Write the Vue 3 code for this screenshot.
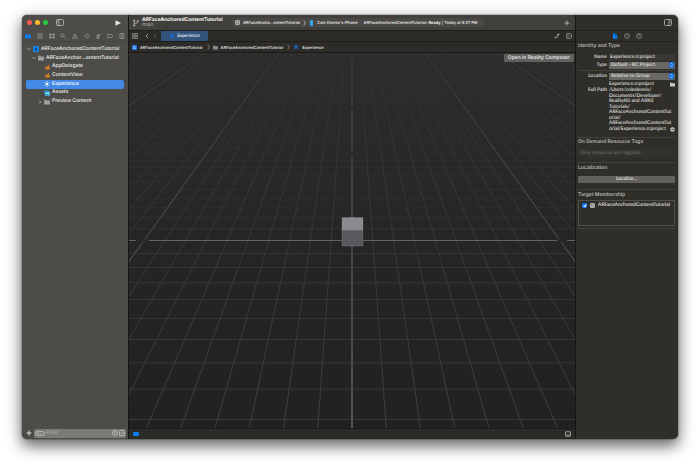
<script setup>
import { ref } from 'vue'

const name = ref('Experience.rcproject')
const filter = ref('')
const member = ref(true)

const files = [
  { label: 'ARFaceAnchoredContentTutorial', icon: 'app', depth: 0, arrow: 'down' },
  { label: 'ARFaceAnchor…ontentTutorial', icon: 'folder', depth: 1, arrow: 'down' },
  { label: 'AppDelegate', icon: 'swift', depth: 2 },
  { label: 'ContentView', icon: 'swift', depth: 2 },
  { label: 'Experience', icon: 'reality', depth: 2, selected: true },
  { label: 'Assets', icon: 'assets', depth: 2 },
  { label: 'Preview Content', icon: 'folder', depth: 2, arrow: 'right' }
]

const navigators = [
  { label: 'Project', d: 'M0 2h4.500l1 1.500H12V10.500H0z', filled: true },
  { label: 'Source Control', d: 'M1.5 1.5h9v9h-9zM4 4l4 4M8 4l-4 4' },
  { label: 'Symbols', d: 'M1 1.5h3v3H1zM8 1.5h3v3H8zM1 7.5h3v3H1zM8 7.5h3v3H8zM4 3h4M4 9h4M2.5 4.500v3M9.500 4.500v3' },
  { label: 'Find', d: 'M8 4.800a3.200 3.200 0 1 1-6.400 0a3.200 3.200 0 1 1 6.400 0M7.200 7.200L11 11' },
  { label: 'Issues', d: 'M6 1.500L11 10.500H1zM6 4.500v3M6 8.500v1' },
  { label: 'Tests', d: 'M6 1L11 6L6 11L1 6zM4.500 6l1 1l2-2' },
  { label: 'Debug', d: 'M2 5h4v6H2zM3 5V3h2v2M7 3h1M9 2h1M9 4h1M7 5h1M2 8h4' },
  { label: 'Breakpoints', d: 'M0.500 3h8.500L11.500 6L9 9H0.500z' },
  { label: 'Reports', d: 'M2 1h8v10H2zM4 3.500h4M4 6h4M4 8.500h4' }
]

const path = [
  '/Users/coledennis/',
  'Documents/Developer/',
  'RealityKit and ARKit',
  'Tutorials/',
  'ARFaceAnchoredContentTut',
  'orial/',
  'ARFaceAnchoredContentTut',
  'orial/Experience.rcproject'
]

// Perspective floor: lines meet at (centre, horizon); one unit is 20.8px wide on the x axis.
const W = 446
const H = 376
const cx = 223
const axis = 188
const horizon = -102
const depth = 23.6
const unit = 20.8
const drop = axis - horizon
const spread = (y) => (unit * (y - horizon)) / drop

const rails = []
for (let i = -34; i <= 34; i++) {
  rails.push({
    x1: cx + i * spread(0),
    x2: cx + i * spread(H),
    kind: i === 0 ? 'axis' : i % 10 === 0 ? 'major' : 'minor'
  })
}
const rungs = []
for (let k = -43; k <= 9; k++) {
  rungs.push({
    y: horizon + drop / (1 - k / depth),
    kind: k === 0 ? 'axis' : 'minor rung'
  })
}
</script>

<template>
  <div class="page">
    <main class="window">
      <aside class="sidebar">
        <header class="side-top">
          <i class="light red"></i><i class="light yellow"></i><i class="light green"></i>
          <button class="icon-btn toggle" aria-label="Toggle navigator">
            <svg width="8" height="7" viewBox="0 0 16 14"><rect x="1" y="1" width="14" height="12" rx="2" class="ln" /><path d="M6 1v12M2.500 4h2M2.500 6.500h2" class="ln" /></svg>
          </button>
          <button class="icon-btn run" aria-label="Run">
            <svg width="6" height="6" viewBox="0 0 12 12"><path d="M1 0.500L12 6L1 11.500z" fill="#e8e8e6" /></svg>
          </button>
        </header>
        <nav class="navs">
          <button v-for="n in navigators" :key="n.label" class="icon-btn" :aria-label="n.label">
            <svg width="6" height="6" viewBox="0 0 12 12"><path :d="n.d" :class="n.filled ? 'solid' : 'ln dim'" /></svg>
          </button>
        </nav>
        <ul class="tree">
          <li v-for="f in files" :key="f.label" :class="['depth' + f.depth, { selected: f.selected }]">
            <span class="arrow">
              <svg v-if="f.arrow" width="4" height="4" viewBox="0 0 8 8"><path :d="f.arrow === 'down' ? 'M1 2.500L4 5.500L7 2.500' : 'M2.500 1L5.500 4L2.500 7'" class="ln" /></svg>
            </span>
            <svg class="file" width="6" height="6" viewBox="0 0 12 12">
              <template v-if="f.icon === 'app'"><rect width="12" height="12" rx="2" fill="#178bec" /><path d="M6 2.500L3.200 9M6 2.500L8.800 9M2.500 7.500h7" stroke="#0b3768" stroke-width="1.300" fill="none" /></template>
              <path v-else-if="f.icon === 'folder'" d="M0 1.500h4.500l1.200 1.300H12v8.200H0zM0 4.200h12" fill="#a2a2a0" stroke="#777774" stroke-width="0.600" />
              <path v-else-if="f.icon === 'swift'" d="M7.500 1c3 2 4 4.800 3.300 7c1.100 1.300 0.900 2.600 0.800 3c-1-1-1.900-0.800-2.700-0.400C5.500 12 2 10.500 0.300 7.800c2.200 1.500 4.400 1.700 5.900 0.900C4 7 2.300 5 1.500 3.200c1.900 1.700 3.200 2.600 4.200 3.200C4.500 5 3.600 3.700 3 2.500c2 2 4 3.600 5.800 4.600C9.200 5.200 8.700 3 7.500 1z" fill="#f58a24" />
              <template v-else-if="f.icon === 'reality'"><path d="M6 0v12M0.800 3l10.400 6M0.800 9l10.400-6" stroke="#fff" stroke-width="1.500" stroke-dasharray="2.500 1" /><circle cx="6" cy="6" r="2.300" fill="#fff" /></template>
              <template v-else><rect x="0.500" y="1" width="9" height="7" rx="1" fill="#1c6b8c" stroke="#3cc3ee" /><rect x="2.500" y="4" width="9" height="7" rx="1" fill="#8fd9f0" stroke="#25b4e4" /><path d="M3 10l2.500-3l2 2l1.500-1l2 2.500z" fill="#1592c0" /></template>
            </svg>
            <span>{{ f.label }}</span>
          </li>
        </ul>
        <footer class="side-foot">
          <button class="icon-btn" aria-label="Add"><svg width="6" height="6" viewBox="0 0 12 12"><path d="M6 1v10M1 6h10" class="ln strong" /></svg></button>
          <label class="filter">
            <svg width="10" height="5" viewBox="0 0 20 10"><rect x="1" y="1" width="18" height="8" rx="4" class="ln" /><path d="M4 4h5M5 6h3M12 4.500l1.500 1.500L15 4.500" class="ln" /></svg>
            <input v-model="filter" placeholder="Filter" aria-label="Filter" />
            <svg width="6" height="6" viewBox="0 0 12 12"><circle cx="6" cy="6" r="5" class="ln" /><path d="M6 3v3H3.500" class="ln" /></svg>
            <svg width="6" height="6" viewBox="0 0 12 12"><rect x="1" y="1" width="10" height="10" rx="2" class="ln" /><path d="M3 6h2.500M6.500 6H9M7.750 4.750v2.500" class="ln" /></svg>
          </label>
        </footer>
      </aside>

      <section class="editor">
        <header class="toolbar">
          <svg width="6" height="8" viewBox="0 0 12 16"><circle cx="2.500" cy="3" r="1.500" class="ln" /><circle cx="2.500" cy="13" r="1.500" class="ln" /><circle cx="9.500" cy="4.500" r="1.500" class="ln" /><path d="M2.500 4.500v7M9.500 6c0 2.500-3 2.500-7 2.800" class="ln" /></svg>
          <div class="project"><strong>ARFaceAnchoredContentTutorial</strong><small>main</small></div>
          <div class="status">
            <svg width="5" height="5" viewBox="0 0 10 10"><rect x="1" y="1" width="8" height="8" rx="1.500" fill="#777" stroke="#d5d5d3" stroke-width="1.500" /><path d="M3 5h4M5 3v4" stroke="#ddd" /></svg>
            <span>ARFaceAncho…ontentTutorial</span>
            <svg class="sep" width="3" height="6" viewBox="0 0 6 12"><path d="M1.500 1L4.500 6L1.500 11" class="ln" /></svg>
            <i class="phone"></i>
            <span class="device">Cole Dennis's iPhone</span>
            <span class="ready">ARFaceAnchoredContentTutorial: <b>Ready</b> | Today at 8:07 PM</span>
          </div>
          <button class="icon-btn plus" aria-label="New tab"><svg width="6" height="6" viewBox="0 0 12 12"><path d="M6 1v10M1 6h10" class="ln" /></svg></button>
        </header>

        <div class="tabs">
          <button class="icon-btn related" aria-label="Related items"><svg width="6" height="6" viewBox="0 0 12 12"><path d="M1 1h4v4H1zM7 1h4v4H7zM1 7h4v4H1zM7 7h4v4H7z" class="ln dim" /></svg></button>
          <button class="icon-btn" aria-label="Back"><svg width="4" height="6" viewBox="0 0 8 12"><path d="M6 2L2 6L6 10" class="ln" /></svg></button>
          <button class="icon-btn" aria-label="Forward"><svg width="4" height="6" viewBox="0 0 8 12"><path d="M2 2L6 6L2 10" class="ln faint" /></svg></button>
          <button class="tab">
            <svg width="6" height="6" viewBox="0 0 12 12"><path d="M6 0.500v11M1.200 3.200l9.600 5.600M1.200 8.800l9.600-5.600" class="spark" /></svg>
            <em>Experience</em>
          </button>
          <button class="icon-btn swap" aria-label="Recent changes"><svg width="6" height="6" viewBox="0 0 12 12"><path d="M1 9h6V3.500M5 6l2-2.500M4 7L1.500 9L4 11M8 1l3 2L8 5M11 3H6" class="ln dim" /></svg></button>
          <button class="icon-btn" aria-label="Add editor"><svg width="6" height="6" viewBox="0 0 12 12"><rect x="1" y="1" width="10" height="10" rx="1.500" class="ln dim" /><path d="M4 1v10M6 6h5" class="ln dim" /></svg></button>
        </div>

        <nav class="crumbs">
          <svg width="5" height="5" viewBox="0 0 10 10"><rect width="10" height="10" rx="1.500" fill="#1977ea" /><path d="M5 2L2.500 8M5 2l2.500 6M2 6.500h6" stroke="#b9dcff" fill="none" /></svg>
          <a href="#">ARFaceAnchoredContentTutorial</a>
          <svg width="3" height="6" viewBox="0 0 6 12"><path d="M1.500 1L4.500 6L1.500 11" class="ln dim" /></svg>
          <svg width="5" height="5" viewBox="0 0 10 10"><path d="M0 1.500h4l1 1h5v6.500H0z" fill="#8a8a87" /></svg>
          <a href="#">ARFaceAnchoredContentTutorial</a>
          <svg width="3" height="6" viewBox="0 0 6 12"><path d="M1.500 1L4.500 6L1.500 11" class="ln dim" /></svg>
          <svg width="6" height="6" viewBox="0 0 12 12"><path d="M6 0.500v11M1.200 3.200l9.600 5.600M1.200 8.800l9.600-5.600" class="spark" /></svg>
          <a href="#">Experience</a>
        </nav>

        <div class="viewport">
          <svg class="scene" :viewBox="`0 0 ${W} ${H}`" preserveAspectRatio="xMidYMid slice">
            <defs>
              <linearGradient id="fade" x1="0" y1="0" x2="0" :y2="H" gradientUnits="userSpaceOnUse">
                <stop offset="0" stop-color="#fff" stop-opacity="0.200" />
                <stop offset="0.350" stop-color="#fff" stop-opacity="0.600" />
                <stop offset="1" stop-color="#fff" />
              </linearGradient>
              <linearGradient id="rungFade" x1="0" y1="0" x2="0" :y2="H" gradientUnits="userSpaceOnUse">
                <stop offset="0" stop-color="#fff" stop-opacity="0.150" />
                <stop offset="0.450" stop-color="#fff" stop-opacity="0.450" />
                <stop offset="0.500" stop-color="#fff" stop-opacity="0.800" />
                <stop offset="1" stop-color="#fff" />
              </linearGradient>
              <mask id="haze" maskUnits="userSpaceOnUse" x="0" y="0" :width="W" :height="H"><rect :width="W" :height="H" fill="url(#fade)" /></mask>
              <mask id="rungHaze" maskUnits="userSpaceOnUse" x="0" y="0" :width="W" :height="H"><rect :width="W" :height="H" fill="url(#rungFade)" /></mask>
            </defs>
            <g mask="url(#haze)">
              <line v-for="(r, i) in rails" :key="'v' + i" :x1="r.x1" y1="0" :x2="r.x2" :y2="H" :class="r.kind" />
            </g>
            <g mask="url(#rungHaze)">
              <line v-for="(r, i) in rungs" :key="'h' + i" x1="0" :y1="r.y" :x2="W" :y2="r.y" :class="r.kind" />
            </g>
            <path d="M7 188h13M428 188h10M223 100v4M223 53v3" stroke="#282828" stroke-width="3" />
            <rect x="213" y="165" width="21" height="13" fill="#8a8990" />
            <rect x="213" y="178" width="21" height="15.500" fill="#59585e" />
            <path d="M213 165h21v28.500h-21zM213 178h21" fill="none" stroke="#a5a4aa" stroke-opacity="0.350" stroke-width="0.600" />
          </svg>
          <button class="open">Open in Reality Composer</button>
        </div>

        <footer class="edit-foot">
          <i class="marker"></i>
          <button class="icon-btn" aria-label="Show debug area"><svg width="6" height="6" viewBox="0 0 12 12"><rect x="1" y="1.500" width="10" height="9" rx="1" class="ln" /><path d="M3 8h6" class="ln" /></svg></button>
        </footer>
      </section>

      <aside class="inspector">
        <header class="insp-top">
          <button class="icon-btn" aria-label="Toggle inspector"><svg width="8" height="7" viewBox="0 0 16 14"><rect x="1" y="1" width="14" height="12" rx="2" class="ln" /><path d="M10 1v12M12 4h1.500M12 6.500h1.500" class="ln" /></svg></button>
        </header>
        <nav class="insp-tabs">
          <button class="icon-btn" aria-label="File"><svg width="6" height="6" viewBox="0 0 12 12"><path d="M2 0.500h4.500V5H10.500v6.500H2zM7.500 0.500L10.500 4h-3z" fill="#0a7cf5" /></svg></button>
          <button class="icon-btn" aria-label="History"><svg width="6" height="6" viewBox="0 0 12 12"><circle cx="6" cy="6" r="5" class="ln dim" /><path d="M6 3v3h2.500" class="ln dim" /></svg></button>
          <button class="icon-btn" aria-label="Help"><svg width="6" height="6" viewBox="0 0 12 12"><circle cx="6" cy="6" r="5" class="ln dim" /><path d="M4.500 4.500c0-2 3-2 3 0c0 1-1.500 1-1.500 2.300M6 8v1" class="ln dim" /></svg></button>
        </nav>

        <section class="identity">
          <h2>Identity and Type</h2>
          <div class="row">
            <label for="name">Name</label>
            <input id="name" v-model="name" />
          </div>
          <div class="row">
            <label for="type">Type</label>
            <span class="pick"><select id="type"><option>Default - RC Project</option></select><svg width="5" height="6" viewBox="0 0 10 12"><path d="M3 5l2-2.500L7 5M3 7l2 2.500L7 7" /></svg></span>
          </div>
          <hr />
          <div class="row">
            <label for="location">Location</label>
            <span class="pick"><select id="location"><option>Relative to Group</option></select><svg width="5" height="6" viewBox="0 0 10 12"><path d="M3 5l2-2.500L7 5M3 7l2 2.500L7 7" /></svg></span>
          </div>
          <div class="row">
            <span></span>
            <span class="value">Experience.rcproject
              <button class="icon-btn" aria-label="Choose folder"><svg width="5" height="5" viewBox="0 0 10 10"><path d="M0 1.500h4l1 1h5V9H0z" fill="#c9c9c5" /></svg></button>
            </span>
          </div>
          <div class="row full">
            <span class="cap">Full Path</span>
            <span class="path"><span v-for="(p, i) in path" :key="i">{{ p }}</span></span>
            <button class="icon-btn go" aria-label="Show in Finder"><svg width="5" height="5" viewBox="0 0 10 10"><circle cx="5" cy="5" r="4.500" fill="#d0d0cd" /><path d="M2.500 5h5M5.500 3l2 2l-2 2" stroke="#2f2e29" stroke-width="1.300" fill="none" /></svg></button>
          </div>
        </section>

        <section class="tags">
          <h2>On Demand Resource Tags</h2>
          <input disabled placeholder="Only resources are taggable" aria-label="Resource tags" />
        </section>

        <section class="local">
          <h2>Localization</h2>
          <button class="localize">Localize…</button>
        </section>

        <section class="target">
          <h2>Target Membership</h2>
          <div class="box">
            <label>
              <input v-model="member" type="checkbox" />
              <svg width="5" height="5" viewBox="0 0 10 10"><rect x="1" y="1" width="8" height="8" rx="1" fill="#777" stroke="#d0d0cd" stroke-width="1.500" /><path d="M5 3L3 7M5 3l2 4M3 6h4" stroke="#eee" fill="none" /></svg>
              <span>ARFaceAnchoredContentTutorial</span>
            </label>
          </div>
        </section>
      </aside>
    </main>
  </div>
</template>

<style>
body { margin: 0; background: #fff; }
</style>

<style scoped>
* { box-sizing: border-box; }
.page {
  display: flex;
  min-height: 100vh;
  padding: 15px 22px 29px;
  overflow: hidden;
  font: 500 5px/7px Inter, "Liberation Sans", sans-serif;
  text-rendering: geometricPrecision;
  color: #eeeeec;
}
.window {
  flex: 1;
  display: grid;
  grid-template-columns: 106px minmax(0, 1fr) 102px;
  border-radius: 5px;
  overflow: hidden;
  background: #2f2e29;
  box-shadow: 0 0 1px 1px rgba(0, 0, 0, 0.2), 0 7px 14px rgba(0, 0, 0, 0.5), 0 4px 20px rgba(0, 0, 0, 0.2);
}
button, input, select { margin: 0; padding: 0; border: 0; background: none; font: inherit; color: inherit; text-rendering: inherit; }
svg { display: block; flex: none; }
.icon-btn { display: flex; align-items: center; justify-content: center; flex: none; }
.ln { fill: none; stroke: #cfcfcc; stroke-width: 1.4; }
.strong { stroke: #ededeb; stroke-width: 1.8; }
.dim { stroke: #a9a9a5; stroke-width: 1.2; }
.faint { stroke: #73726e; }
.solid { fill: #0a7cf5; }
.spark { fill: none; stroke: #1273dd; stroke-width: 1.6; }

.sidebar { display: flex; flex-direction: column; background: #4d4c49; }
.side-top { display: flex; align-items: center; gap: 3px; height: 15px; padding: 0 7px 0 5px; }
.light { width: 5px; height: 5px; border-radius: 50%; }
.red { background: #fb5a54; }
.yellow { background: #fcbb2d; }
.green { background: #27c840; }
.toggle { margin-left: 5px; }
.run { margin-left: auto; }
.navs { display: flex; align-items: center; justify-content: space-between; height: 12px; padding: 0 3px; border-bottom: 1px solid #44433f; }
.tree { display: grid; grid-auto-rows: 1fr; height: 61px; margin: 3px 4px 0; padding: 0; list-style: none; }
.tree li { display: flex; align-items: center; gap: 2px; border-radius: 2px; white-space: nowrap; }
.depth0 { padding-left: 1px; }
.depth1 { padding-left: 6px; }
.depth2 { padding-left: 12px; }
.arrow { width: 4px; }
.selected { background: #438ae6; color: #fff; }
.side-foot { display: flex; align-items: center; gap: 2px; height: 11px; margin-top: auto; padding: 0 2px 1px 4px; }
.filter { display: flex; align-items: center; gap: 1px; flex: 1; min-width: 0; height: 9px; padding: 0 1px; border-radius: 2px; background: #7b7a77; }
.filter input { flex: 1; min-width: 0; height: 7px; outline: 0; }
.filter input::placeholder { color: #aaa9a6; opacity: 1; }

.editor { display: flex; flex-direction: column; border: solid #171613; border-width: 0 1px; background: #2d2b27; }
.toolbar { display: flex; align-items: center; height: 15px; padding: 0 5px 0 4px; background: #403f3c; white-space: nowrap; }
.project { display: flex; flex-direction: column; margin-left: 3px; width: 86px; }
.project strong { line-height: 6px; color: #f4f4f2; font-weight: 700; }
.project small { font-size: 5px; line-height: 5px; color: #a9a9a5; }
.status { display: flex; align-items: center; gap: 3px; height: 9px; margin-left: 4px; padding: 0 3px; border-radius: 2px; background: #494845; font-size: 4px; }
.phone { width: 3px; height: 6px; margin: 0 1px; border-radius: 1px; background: #32a5ee; }
.device { margin-right: 3px; }
.ready { padding-right: 3px; }
.plus { margin-left: auto; }
.tabs { display: flex; align-items: center; gap: 4px; height: 12px; padding: 0 3px; border: solid #1e1d1a; border-width: 1px 0; }
.related { margin-right: 3px; }
.tab { display: flex; align-items: center; justify-content: center; gap: 2px; width: 47px; height: 10px; background: #32537b; color: #eef3f9; font-family: Lato, Inter, sans-serif; }
.swap { margin-left: auto; }
.tabs .icon-btn:last-child { margin-left: 2px; }
.crumbs { display: flex; align-items: center; gap: 3px; height: 10px; padding: 0 3px; font-size: 4px; white-space: nowrap; }
.crumbs a { margin-right: 1px; color: #e6e6e3; text-decoration: none; }
.viewport { position: relative; flex: 1; min-height: 0; border: solid #1b1a18; border-width: 1px 0; background: linear-gradient(#2c2c2c, #262626 45%, #212121); }
.scene { position: absolute; width: 100%; height: 100%; }
.minor { stroke: #48484a; stroke-width: 0.8; }
.rung { stroke: #404042; }
.major { stroke: #7c7c7e; stroke-width: 0.8; }
.axis { stroke: #747476; stroke-width: 1.2; }
.open { position: absolute; top: 1px; right: 1px; height: 8px; padding: 0 4px; border-radius: 1px; background: #61615f; line-height: 8px; color: #f2f2f0; }
.edit-foot { display: flex; align-items: center; justify-content: space-between; height: 10px; padding: 0 4px; }
.marker { width: 6px; height: 4px; border-radius: 1px; background: #0a7cf5; }

.inspector { display: flex; flex-direction: column; min-width: 0; font-family: Lato, Inter, sans-serif; }
.insp-top { display: flex; align-items: center; justify-content: flex-end; height: 15px; padding: 0 6px; }
.insp-tabs { display: flex; align-items: center; justify-content: center; gap: 6px; height: 12px; border: solid #24231f; border-width: 1px 0; }
.inspector section { margin: 0 3px 0 2px; border-bottom: 1px solid #42413d; }
h2 { margin: 0; font: 600 5px/9px Inter, "Liberation Sans", sans-serif; color: #b5b5b1; white-space: nowrap; }
.row { display: grid; grid-template-columns: 29px minmax(0, 1fr); align-items: center; column-gap: 2px; height: 8px; color: #e6e6e3; }
.row label, .cap { text-align: right; white-space: nowrap; }
.row input { width: 100%; height: 7px; padding: 0 1px; background: #393834; }
.pick { display: flex; align-items: center; height: 7px; padding-right: 1px; border-radius: 1px; background: #696865; }
.pick select { flex: 1; min-width: 0; height: 7px; padding: 0 2px; appearance: none; line-height: 7px; }
.pick svg { border-radius: 1px; background: #0c6de0; }
.pick path { fill: none; stroke: #fff; stroke-width: 1.2; }
hr { margin: 1px 0; border: 0; border-top: 1px solid #42413d; }
.identity { height: 96px; }
.identity h2 { padding: 0 0 2px; }
.value { display: flex; justify-content: space-between; align-items: center; }
.row.full { grid-template-columns: 29px minmax(0, 1fr) 5px; height: 44px; align-items: start; line-height: 5px; }
.row.full .path { margin-right: -7px; }
.path { display: grid; grid-auto-rows: 1fr; height: 44px; white-space: nowrap; }
.go { align-self: end; }
.tags { height: 25px; }
.tags input { display: block; width: 100%; height: 8px; margin-top: 2px; padding: 0 2px; background: #33322e; }
.tags input::placeholder { color: #6d6c68; opacity: 1; }
.local { height: 27px; }
.local h2, .target h2 { padding-top: 1px; }
.localize { display: block; width: 100%; height: 7px; margin-top: 3px; border-radius: 1px; background: #62615e; line-height: 7px; }
.target { height: 39px; }
.box { height: 26px; padding: 1px 3px; border: 1px solid #51504c; }
.box label { display: flex; align-items: center; gap: 3px; white-space: nowrap; }
.box input { appearance: none; width: 5px; height: 5px; border-radius: 1px; background: #51504c; }
.box input:checked { background: #0c74ee; }
.box input:checked::after { content: ""; display: block; width: 1px; height: 2px; margin: 1px 0 0 2px; border: solid #fff; border-width: 0 1px 1px 0; box-sizing: content-box; transform: rotate(40deg); }
</style>
